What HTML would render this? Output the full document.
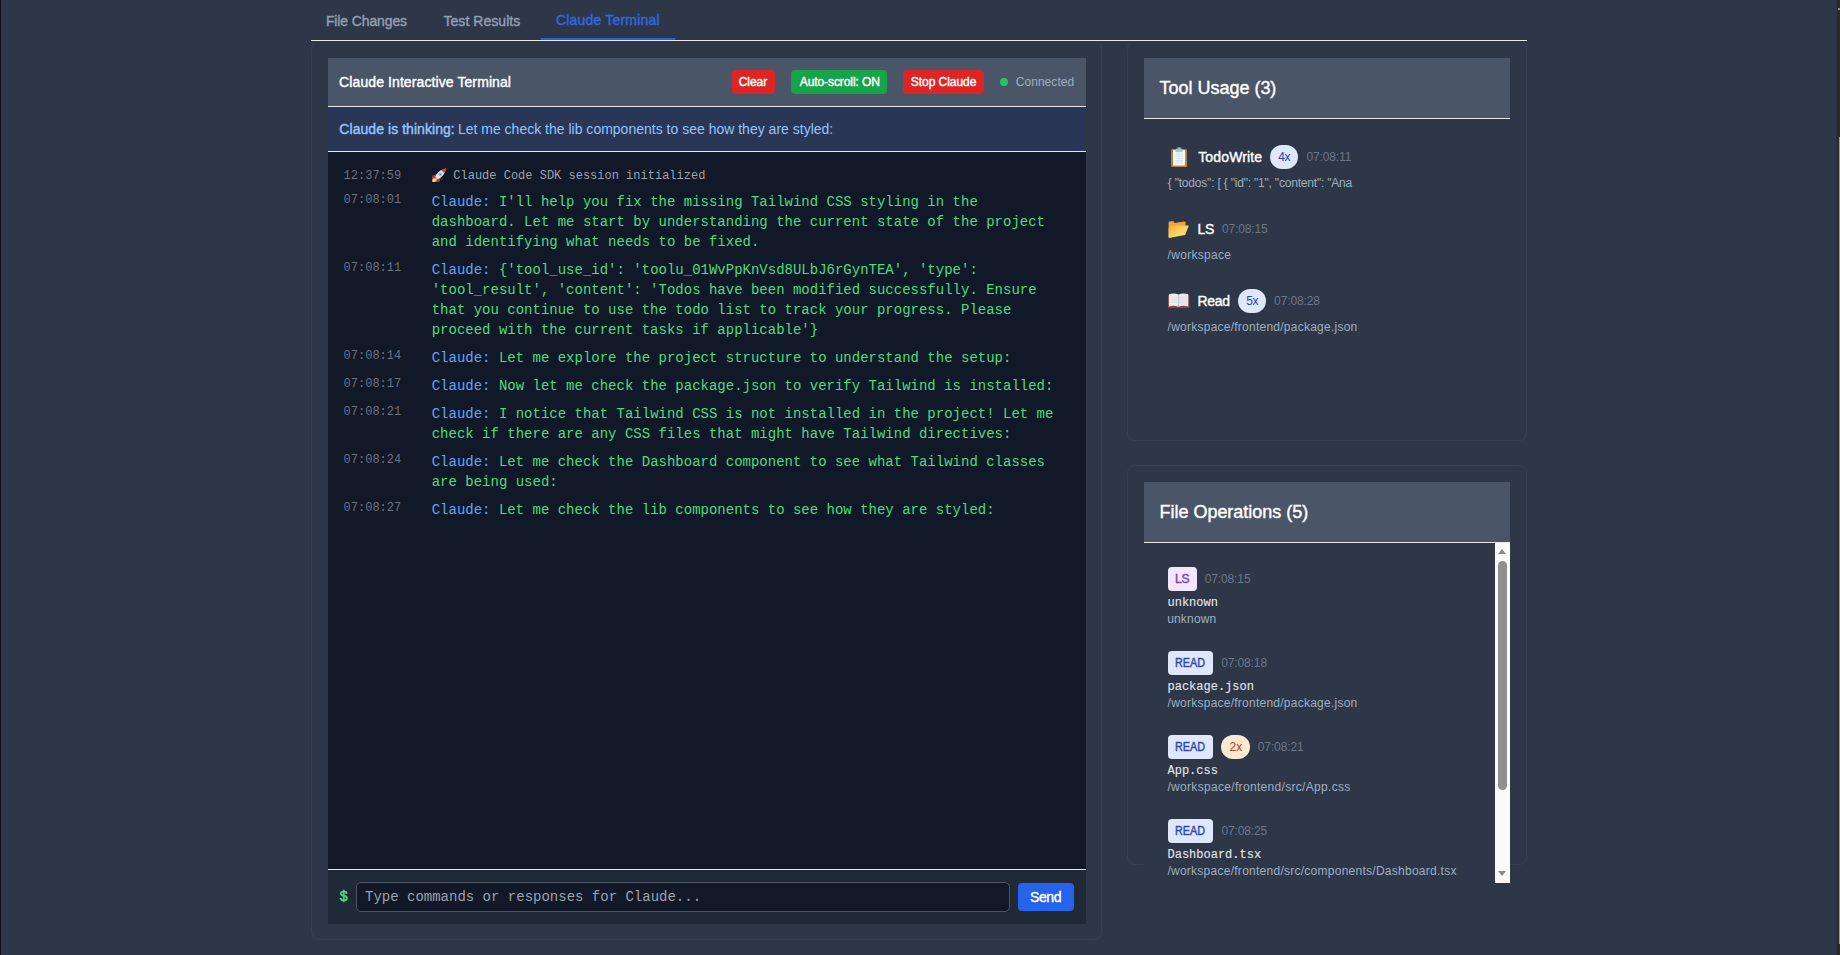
<!DOCTYPE html>
<html lang="en">
<head>
<meta charset="utf-8">
<title>Claude Terminal</title>
<style>
*{box-sizing:border-box;margin:0;padding:0}
html,body{width:1840px;height:955px;overflow:hidden}
body{background:#2d3748;font-family:"Liberation Sans",sans-serif;color:#fff;position:relative}
.a{position:absolute}
.t{position:absolute;white-space:pre;line-height:1;font-family:"Liberation Sans",sans-serif}
.ts{position:absolute;left:343.6px;font-family:"Liberation Mono",monospace;font-size:12px;line-height:16px;color:#6b7280;white-space:pre}
.ln{position:absolute;left:431.7px;font-family:"Liberation Mono",monospace;font-size:14px;line-height:20px;color:#4ade80;white-space:pre}
.ln b{font-weight:normal;color:#60a5fa}
.card{position:absolute;border:1px solid #364053}
</style>
</head>
<body>

<!-- tabs -->
<div class="t" style="left:325.9px;top:14px;font-size:14px;color:#939fb3;letter-spacing:-0.119px;-webkit-text-stroke:0.4px #939fb3;">File Changes</div>
<div class="t" style="left:443.5px;top:14px;font-size:14px;color:#939fb3;letter-spacing:0.042px;-webkit-text-stroke:0.4px #939fb3;">Test Results</div>
<div class="t" style="left:556.0px;top:13px;font-size:14px;color:#3069e0;letter-spacing:0.186px;-webkit-text-stroke:0.4px #3069e0;">Claude Terminal</div>
<div class="a" style="left:541px;top:38px;width:134px;height:2px;background:#2b62d9;"></div>
<div class="a" style="left:311px;top:40px;width:1216px;height:1px;background:#e5e7eb;"></div>
<div class="card" style="left:311px;top:41px;width:791px;height:899px;border-top-color:transparent;border-radius:8px"></div>
<!-- terminal -->
<div class="a" style="left:328px;top:58px;width:758px;height:48px;background:#4a5568;"></div>
<div class="a" style="left:328px;top:106px;width:758px;height:1px;background:#e5e7eb;"></div>
<div class="a" style="left:328px;top:107px;width:758px;height:44px;background:#2a3656;"></div>
<div class="a" style="left:328px;top:151px;width:758px;height:1px;background:#e5e7eb;"></div>
<div class="a" style="left:328px;top:152px;width:758px;height:717px;background:#111827;"></div>
<div class="a" style="left:328px;top:869px;width:758px;height:1px;background:#e5e7eb;"></div>
<div class="a" style="left:328px;top:870px;width:758px;height:54px;background:#1f2937;"></div>
<div class="t" style="left:339.1px;top:75px;font-size:14px;color:#ffffff;letter-spacing:0.096px;-webkit-text-stroke:0.4px #ffffff;">Claude Interactive Terminal</div>
<div class="a" style="left:732px;top:70px;width:43px;height:24px;background:#dc2626;border-radius:4px"></div>
<div class="t" style="left:738.7px;top:76px;font-size:12px;color:#ffffff;letter-spacing:-0.046px;-webkit-text-stroke:0.4px #ffffff;">Clear</div>
<div class="a" style="left:791px;top:70px;width:96px;height:24px;background:#16a34a;border-radius:4px"></div>
<div class="t" style="left:799.8px;top:76px;font-size:12px;color:#ffffff;letter-spacing:-0.091px;-webkit-text-stroke:0.4px #ffffff;">Auto-scroll: ON</div>
<div class="a" style="left:903px;top:70px;width:81px;height:24px;background:#dc2626;border-radius:4px"></div>
<div class="t" style="left:910.8px;top:76px;font-size:12px;color:#ffffff;letter-spacing:-0.05px;-webkit-text-stroke:0.4px #ffffff;">Stop Claude</div>
<div class="a" style="left:1000px;top:78px;width:8px;height:8px;background:#22c55e;border-radius:50%"></div>
<div class="t" style="left:1015.7px;top:76px;font-size:12px;color:#a0aec0;letter-spacing:0.058px;">Connected</div>
<div class="t" style="left:339.3px;top:122px;font-size:14px;color:#93c5fd;letter-spacing:0.058px;-webkit-text-stroke:0.4px #93c5fd;">Claude is thinking:</div>
<div class="t" style="left:457.9px;top:122px;font-size:14px;color:#93c5fd;letter-spacing:0.004px;">Let me check the lib components to see how they are styled:</div>
<!-- log -->
<div class="ts" style="top:168px">12:37:59</div>
<div class="ln" style="top:168px;font-size:12px;line-height:16px;color:#9ca3af">   Claude Code SDK session initialized</div>
<div class="ts" style="top:192px">07:08:01</div>
<div class="ln" style="top:192px;"><b>Claude:</b> I'll help you fix the missing Tailwind CSS styling in the
dashboard. Let me start by understanding the current state of the project
and identifying what needs to be fixed.</div>
<div class="ts" style="top:260px">07:08:11</div>
<div class="ln" style="top:260px;"><b>Claude:</b> {'tool_use_id': 'toolu_01WvPpKnVsd8ULbJ6rGynTEA', 'type':
'tool_result', 'content': 'Todos have been modified successfully. Ensure
that you continue to use the todo list to track your progress. Please
proceed with the current tasks if applicable'}</div>
<div class="ts" style="top:348px">07:08:14</div>
<div class="ln" style="top:348px;"><b>Claude:</b> Let me explore the project structure to understand the setup:</div>
<div class="ts" style="top:376px">07:08:17</div>
<div class="ln" style="top:376px;"><b>Claude:</b> Now let me check the package.json to verify Tailwind is installed:</div>
<div class="ts" style="top:404px">07:08:21</div>
<div class="ln" style="top:404px;"><b>Claude:</b> I notice that Tailwind CSS is not installed in the project! Let me
check if there are any CSS files that might have Tailwind directives:</div>
<div class="ts" style="top:452px">07:08:24</div>
<div class="ln" style="top:452px;"><b>Claude:</b> Let me check the Dashboard component to see what Tailwind classes
are being used:</div>
<div class="ts" style="top:500px">07:08:27</div>
<div class="ln" style="top:500px;"><b>Claude:</b> Let me check the lib components to see how they are styled:</div>
<svg class="a" style="left:432px;top:167.500px" width="14.500" height="14.500" viewBox="0 0 14 14">
<path d="M0 7.400 4.600 5.800 8.400 9.600 7.200 13.800 4 13.400 0.200 11.600z" fill="#a83a30"/>
<path d="M3.200 8.400C4.600 4.800 7.600 2.400 10.400 1.400l2.200 2.200C11.600 6.400 9.200 9.400 5.600 10.800z" fill="#dce8f2"/>
<path d="M9 2.200C10.600.800 12.600.100 14 0c-.1 1.400-.8 3.400-2.200 5z" fill="#cc463c"/>
<circle cx="8" cy="6" r="1.900" fill="#93d2ea"/><circle cx="8" cy="6" r=".8" fill="#3d7c9a"/>
<ellipse cx="2.500" cy="11.600" rx="2.700" ry="1.900" transform="rotate(-40 2.500 11.600)" fill="#f3a862"/>
<ellipse cx="2.200" cy="11.900" rx="1.500" ry="1" transform="rotate(-40 2.200 11.900)" fill="#fde0b0"/>
</svg>
<!-- input -->
<div class="t" style="left:339.4px;top:890px;font-size:14px;color:#4ade80;-webkit-text-stroke:0.5px #4ade80;font-family:'Liberation Mono',monospace;">$</div>
<div class="a" style="left:356px;top:882px;width:654px;height:30px;background:#111827;border:1px solid #4b5563;border-radius:5px"></div>
<div class="t" style="left:365px;top:890px;font-size:14px;color:#9ca3af;font-family:'Liberation Mono',monospace;">Type commands or responses for Claude...</div>
<div class="a" style="left:1018px;top:883px;width:56px;height:28px;background:#2563eb;border-radius:4px"></div>
<div class="t" style="left:1030.0px;top:890px;font-size:14px;color:#ffffff;letter-spacing:-0.407px;-webkit-text-stroke:0.4px #ffffff;">Send</div>
<!-- tool usage -->
<div class="card" style="left:1127px;top:41px;width:400px;height:400px;border-top-color:transparent;border-radius:8px"></div>
<div class="a" style="left:1144px;top:58px;width:366px;height:60px;background:#4a5568;"></div>
<div class="a" style="left:1144px;top:118px;width:366px;height:1px;background:#e5e7eb;"></div>
<div class="t" style="left:1159.6px;top:79px;font-size:18px;color:#ffffff;letter-spacing:-0.022px;-webkit-text-stroke:0.4px #ffffff;">Tool Usage (3)</div>
<div class="t" style="left:1198.2px;top:150px;font-size:14px;color:#ffffff;letter-spacing:0.148px;-webkit-text-stroke:0.4px #ffffff;">TodoWrite</div>
<div class="a" style="left:1270px;top:145px;width:28px;height:24px;background:#dfe8fb;border-radius:12px"></div>
<div class="t" style="left:1278.3px;top:151px;font-size:12px;color:#2a43a8;letter-spacing:-0.469px;">4x</div>
<div class="t" style="left:1306.4px;top:151px;font-size:12px;color:#6b7688;letter-spacing:-0.12px;">07:08:11</div>
<div class="t" style="left:1167.7px;top:177px;font-size:12px;color:#a0aec0;letter-spacing:-0.197px;">{ "todos": [ { "id": "1", "content": "Ana</div>
<div class="t" style="left:1197.6px;top:222px;font-size:14px;color:#ffffff;letter-spacing:-0.357px;-webkit-text-stroke:0.4px #ffffff;">LS</div>
<div class="t" style="left:1221.9px;top:223px;font-size:12px;color:#6b7688;letter-spacing:-0.12px;">07:08:15</div>
<div class="t" style="left:1167.6px;top:249px;font-size:12px;color:#a0aec0;letter-spacing:0.296px;">/workspace</div>
<div class="t" style="left:1197.6px;top:294px;font-size:14px;color:#ffffff;letter-spacing:-0.358px;-webkit-text-stroke:0.4px #ffffff;">Read</div>
<div class="a" style="left:1238px;top:289px;width:28px;height:24px;background:#dfe8fb;border-radius:12px"></div>
<div class="t" style="left:1246.3px;top:295px;font-size:12px;color:#2a43a8;letter-spacing:-0.469px;">5x</div>
<div class="t" style="left:1274.1px;top:295px;font-size:12px;color:#6b7688;letter-spacing:-0.12px;">07:08:28</div>
<div class="t" style="left:1167.6px;top:321px;font-size:12px;color:#a0aec0;letter-spacing:0.243px;">/workspace/frontend/package.json</div>
<svg class="a" style="left:1170.500px;top:146.800px" width="16.200" height="20.400" viewBox="0 0 16 20">
<rect x="0" y="1.900" width="16" height="18.100" rx="1.600" fill="#b67a43"/>
<rect x="2" y="3" width="12" height="15.300" fill="#f7f9fb"/>
<rect x="4.600" y="1.700" width="6.800" height="3.400" rx=".8" fill="#9dcdc9"/>
<rect x="6.300" y=".2" width="3.400" height="2.600" rx="1.200" fill="#8fc3bf"/>
<path d="M4.300 7.200h7.600M4.300 9.300h7.600M4.300 11.400h7.600M4.300 13.500h7.600M4.300 15.600h7.600" stroke="#c3d2dc" stroke-width=".7"/>
</svg>
<svg class="a" style="left:1168px;top:220px" width="22" height="19" viewBox="0 0 22 19">
<defs><linearGradient id="fg" x1="0" y1="0" x2="1" y2="1"><stop offset="0" stop-color="#f6ad42"/><stop offset=".55" stop-color="#fbd562"/><stop offset="1" stop-color="#fdea86"/></linearGradient></defs>
<path d="M.6 2.200 1.800 1.200h3.800l1 1.700 10-1.300 1 1v6L.6 17.400z" fill="#f2a53a"/>
<path d="M.6 8.500 3 5.800l17.900-.3L17.100 14.900 1.100 17.900.6 17.200z" fill="url(#fg)"/>
</svg>
<svg class="a" style="left:1168.400px;top:293.200px" width="21.200" height="15.200" viewBox="0 0 21 15">
<path d="M0 2.500 1.200 1.600h18.600l1.200.9V15H0z" fill="#93403f"/>
<path d="M.9 1.300C4 .1 7.500.1 10.500 1.400v12.100C7.500 12.400 4 12.400.9 13.300z" fill="#ecedf1"/>
<path d="M20.100 1.300C17 .1 13.500.1 10.500 1.400v12.100c3-1.100 6.500-1.100 9.600-.2z" fill="#e6e8ed"/>
<path d="M10.500 1.600v11.800" stroke="#bfc5ce" stroke-width=".7"/>
<path d="M3 4.400c2-.5 4-.5 5.800.2M3 6.800c2-.5 4-.5 5.800.2M3 9.200c2-.5 4-.5 5.800.2M18 4.400c-2-.5-4-.5-5.800.2M18 6.800c-2-.5-4-.5-5.800.2M18 9.200c-2-.5-4-.5-5.800.2" stroke="#d3d7de" stroke-width=".6" fill="none"/>
</svg>
<!-- file ops -->
<div class="card" style="left:1127px;top:465px;width:400px;height:400px;border-radius:8px"></div>
<div class="a" style="left:1144px;top:543px;width:366px;height:340px;background:#2d3748;"></div>
<div class="a" style="left:1144px;top:482px;width:366px;height:60px;background:#4a5568;"></div>
<div class="a" style="left:1144px;top:542px;width:366px;height:1px;background:#e5e7eb;"></div>
<div class="t" style="left:1159.5px;top:503px;font-size:18px;color:#ffffff;letter-spacing:-0.02px;-webkit-text-stroke:0.4px #ffffff;">File Operations (5)</div>
<div class="a" style="left:1495px;top:543px;width:15px;height:340px;background:#fafafa;"></div>
<div class="a" style="left:1498px;top:561px;width:9px;height:229px;background:#8f8f8f;border-radius:4.5px"></div>
<div class="a" style="left:1498px;top:549px;width:0;height:0;border-left:4.5px solid transparent;border-right:4.5px solid transparent;border-bottom:5px solid #8a8a8a"></div>
<div class="a" style="left:1498px;top:871px;width:0;height:0;border-left:4.5px solid transparent;border-right:4.5px solid transparent;border-top:5px solid #8a8a8a"></div>
<div class="a" style="left:1168px;top:567px;width:29px;height:24px;background:#f1e6fd;border-radius:4px"></div>
<div class="t" style="left:1174.9px;top:573px;font-size:12px;color:#7b3fb5;letter-spacing:-0.106px;-webkit-text-stroke:0.4px #7b3fb5;">LS</div>
<div class="t" style="left:1204.7px;top:573px;font-size:12px;color:#6b7688;letter-spacing:-0.12px;">07:08:15</div>
<div class="t" style="left:1167.5px;top:597px;font-size:12px;color:#e2e8f0;-webkit-text-stroke:0.1px #e2e8f0;font-family:'Liberation Mono',monospace;">unknown</div>
<div class="t" style="left:1167.2px;top:613px;font-size:12px;color:#a0aec0;letter-spacing:0.167px;">unknown</div>
<div class="a" style="left:1168px;top:651px;width:45px;height:24px;background:#dfe8fb;border-radius:4px"></div>
<div class="t" style="left:1175.3px;top:657px;font-size:12px;color:#2f47ad;-webkit-text-stroke:0.4px #2f47ad;transform:scaleX(0.9);transform-origin:0 0;">READ</div>
<div class="t" style="left:1221.2px;top:657px;font-size:12px;color:#6b7688;letter-spacing:-0.12px;">07:08:18</div>
<div class="t" style="left:1167.5px;top:681px;font-size:12px;color:#e2e8f0;-webkit-text-stroke:0.1px #e2e8f0;font-family:'Liberation Mono',monospace;">package.json</div>
<div class="t" style="left:1167.6px;top:697px;font-size:12px;color:#a0aec0;letter-spacing:0.243px;">/workspace/frontend/package.json</div>
<div class="a" style="left:1168px;top:735px;width:45px;height:24px;background:#dfe8fb;border-radius:4px"></div>
<div class="t" style="left:1175.3px;top:741px;font-size:12px;color:#2f47ad;-webkit-text-stroke:0.4px #2f47ad;transform:scaleX(0.9);transform-origin:0 0;">READ</div>
<div class="a" style="left:1221px;top:735px;width:29px;height:24px;background:#fde8d0;border-radius:12px"></div>
<div class="t" style="left:1229.4px;top:741px;font-size:12px;color:#a4461f;letter-spacing:0.122px;">2x</div>
<div class="t" style="left:1257.8px;top:741px;font-size:12px;color:#6b7688;letter-spacing:-0.12px;">07:08:21</div>
<div class="t" style="left:1167.5px;top:765px;font-size:12px;color:#e2e8f0;-webkit-text-stroke:0.1px #e2e8f0;font-family:'Liberation Mono',monospace;">App.css</div>
<div class="t" style="left:1167.4px;top:781px;font-size:12px;color:#a0aec0;letter-spacing:0.319px;">/workspace/frontend/src/App.css</div>
<div class="a" style="left:1168px;top:819px;width:45px;height:24px;background:#dfe8fb;border-radius:4px"></div>
<div class="t" style="left:1175.3px;top:825px;font-size:12px;color:#2f47ad;-webkit-text-stroke:0.4px #2f47ad;transform:scaleX(0.9);transform-origin:0 0;">READ</div>
<div class="t" style="left:1221.4px;top:825px;font-size:12px;color:#6b7688;letter-spacing:-0.12px;">07:08:25</div>
<div class="t" style="left:1167.5px;top:849px;font-size:12px;color:#e2e8f0;-webkit-text-stroke:0.1px #e2e8f0;font-family:'Liberation Mono',monospace;">Dashboard.tsx</div>
<div class="t" style="left:1167.4px;top:865px;font-size:12px;color:#a0aec0;letter-spacing:0.26px;">/workspace/frontend/src/components/Dashboard.tsx</div>
<!-- edges -->
<div class="a" style="left:0px;top:0px;width:1px;height:955px;background:#0e0e1a;"></div>
<div class="a" style="left:1836px;top:0px;width:1px;height:955px;background:#2c313b;"></div>
<div class="a" style="left:1837px;top:0px;width:3px;height:955px;background:#2b2b2a;"></div>
<div class="a" style="left:1839px;top:137px;width:1px;height:807px;background:#9a9a9a;"></div>
<div class="a" style="left:1838px;top:8px;width:2px;height:2px;background:#8a8a8a;"></div>
</body>
</html>
